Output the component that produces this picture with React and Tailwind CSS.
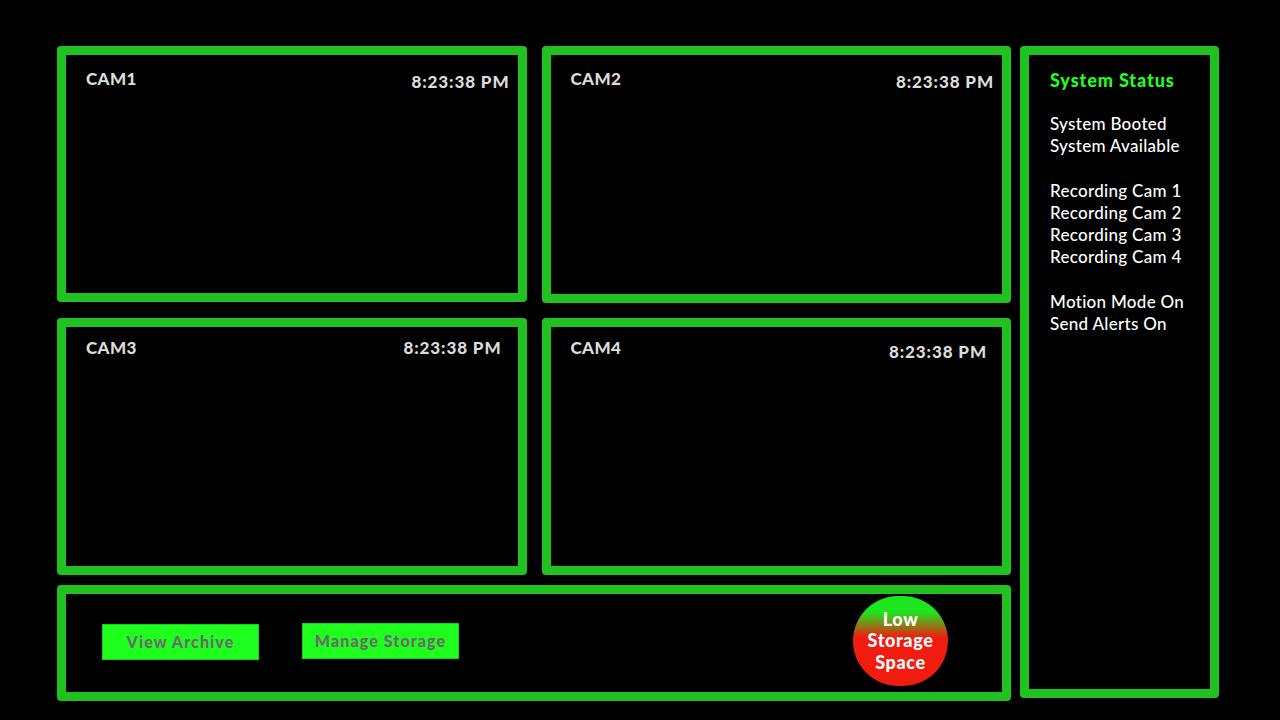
import React from "react";

const font = { fontFamily: "Lato, 'Noto Sans', sans-serif" };

function Cam({ name, time, pr = "pr-[8px]", top = "pt-[14px]", tmt = "mt-[3px]" }) {
  return (
    <div className="relative h-full border-[9px] border-[#1fc21f] rounded-[4px] bg-black">
      <div className={`flex items-start justify-between pl-[20px] ${pr} ${top}`}>
        <span className="text-[17px] font-black text-[#dcdcdc] leading-[20px] tracking-[0.4px]">{name}</span>
        <span className={`${tmt} text-[17px] font-black text-[#dcdcdc] leading-[20px] tracking-[0.9px]`}>{time}</span>
      </div>
    </div>
  );
}

export default function App() {
  const t = "8:23:38 PM";
  return (
    <div className="w-[1280px] h-[720px] bg-black overflow-hidden" style={font}>
      <div className="flex pl-[57px] pt-[46px] gap-[9px]">
        <div className="w-[954px] flex flex-col">
          <div className="grid grid-cols-2 gap-x-[15px] gap-y-[15px]">
            <div className="h-[256px]"><Cam name="CAM1" time={t} /></div>
            <div className="h-[257px]"><Cam name="CAM2" time={t} /></div>
            <div className="h-[257px]"><Cam name="CAM3" time={t} pr="pr-[16px]" top="pt-[11px]" tmt="mt-[0px]" /></div>
            <div className="h-[257px]"><Cam name="CAM4" time={t} pr="pr-[15px]" top="pt-[11px]" tmt="mt-[4px]" /></div>
          </div>
          <div className="mt-[10px] h-[116px] border-[9px] border-[#1fc21f] rounded-[4px] flex items-center pl-[36px] pr-[54px] pb-[4px]">
            <button className="w-[157px] h-[36px] bg-[#1eff1e] border border-[#18d018] text-[#6a6a6a] text-[16px] font-black tracking-[1.1px] mt-[2px]">
              View Archive
            </button>
            <button className="ml-[43px] w-[157px] h-[36px] bg-[#1eff1e] border border-[#18d018] text-[#6a6a6a] text-[16px] font-black tracking-[1.1px]">
              Manage Storage
            </button>
            <div className="ml-auto w-[95px] h-[90px] rounded-full bg-[linear-gradient(to_bottom,#1ee61e_0%,#1ee61e_18%,#f01c10_46%,#f01c10_100%)] flex flex-col items-center justify-center text-white text-[18px] font-black leading-[21.5px] tracking-[0.6px]">
              <span>Low</span>
              <span>Storage</span>
              <span>Space</span>
            </div>
          </div>
        </div>
        <div className="w-[199px] h-[652px] border-[9px] border-[#1fc21f] rounded-[4px] pl-[21px] pt-[13px]">
          <div className="text-[18px] font-black text-[#22ff22] leading-[24px] tracking-[0.9px]">System Status</div>
          <div className="mt-[21px] text-[17px] font-medium text-white leading-[22px] tracking-[0.3px]">
            <div>System Booted</div>
            <div>System Available</div>
            <div className="h-[23px]" />
            <div>Recording Cam 1</div>
            <div>Recording Cam 2</div>
            <div>Recording Cam 3</div>
            <div>Recording Cam 4</div>
            <div className="h-[23px]" />
            <div>Motion Mode On</div>
            <div>Send Alerts On</div>
          </div>
        </div>
      </div>
    </div>
  );
}
